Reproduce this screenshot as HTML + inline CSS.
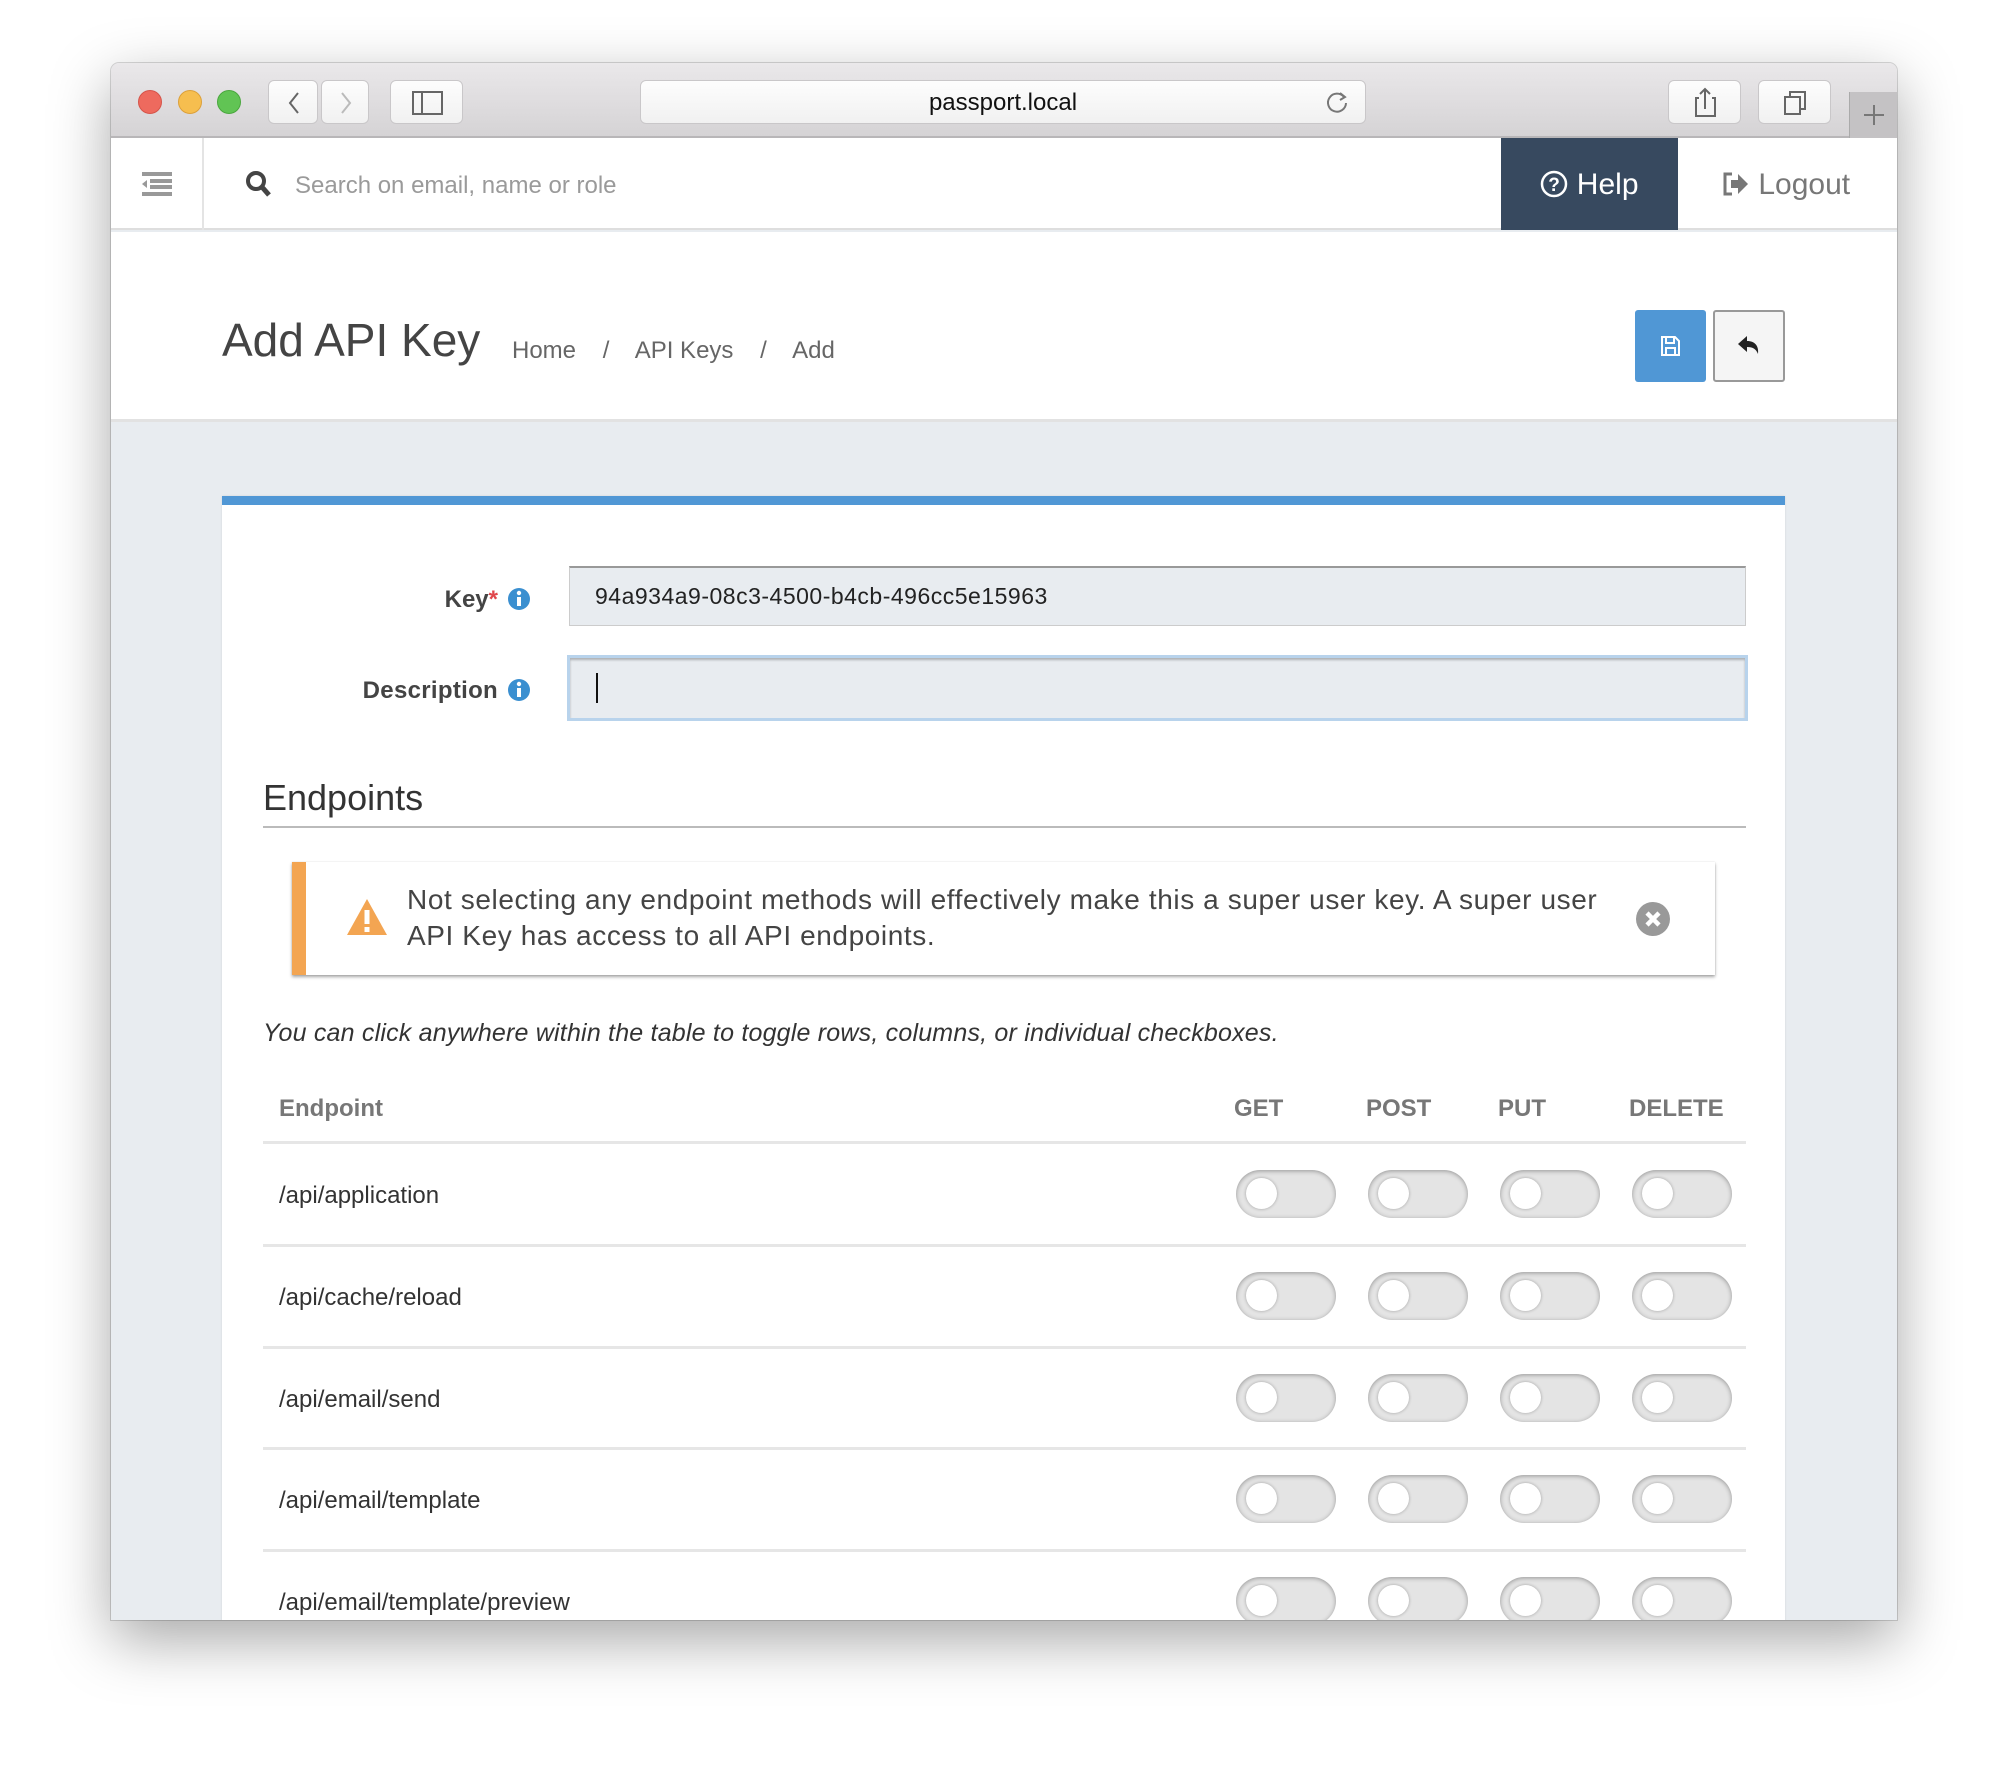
<!DOCTYPE html>
<html><head><meta charset="utf-8"><style>
*{box-sizing:border-box;margin:0;padding:0}
body{width:2008px;height:1780px;background:#fff;font-family:"Liberation Sans",Arial,sans-serif;position:relative;overflow:hidden}
.abs{position:absolute}
.win{left:111px;top:63px;width:1786px;height:1557px;border-radius:8px 8px 0 0;overflow:hidden;box-shadow:0 20px 60px rgba(0,0,0,.35),0 0 0 1px rgba(0,0,0,.15);background:#e8ecf0}
.tb{left:0;top:0;width:1786px;height:75px;background:linear-gradient(#eae8ea,#d5d3d5);border-bottom:2px solid #b8b6b8}
.dot{width:24px;height:24px;border-radius:50%;top:27px}
.btn{top:17px;height:44px;background:linear-gradient(#fdfdfd,#f1f1f1);border:1px solid #c9c7c9;border-radius:6px}
.nav{left:0;top:75px;width:1786px;height:92px;background:#fff;border-bottom:2px solid #dedede}
.toggle{width:100px;height:48px;border-radius:24px;background:#e4e4e4;box-shadow:inset 0 1px 5px rgba(0,0,0,.35)}
.toggle:after{content:"";position:absolute;left:10px;top:8px;width:31px;height:31px;border-radius:50%;background:#fff;box-shadow:0 0 3px rgba(0,0,0,.3)}
.row{left:41px;width:1483px;border-top:3px solid #e6e6e6}
.ep{font-size:24px;color:#333;left:57px}
.th{font-size:24px;font-weight:bold;color:#777;top:590px}
</style></head><body>
<div class="abs win">
 <div class="abs tb">
  <div class="abs dot" style="left:27px;background:#ee6a5e;border:1px solid #d5544a"></div>
  <div class="abs dot" style="left:67px;background:#f6be4f;border:1px solid #dca03a"></div>
  <div class="abs dot" style="left:106px;background:#61c454;border:1px solid #4aa73e"></div>
  <div class="abs btn" style="left:157px;width:50px"><svg width="50" height="44"><path d="M29 12 L21 22 L29 32" stroke="#666" stroke-width="2" fill="none"/></svg></div>
  <div class="abs btn" style="left:210px;width:48px"><svg width="48" height="44"><path d="M20 12 L28 22 L20 32" stroke="#bbb" stroke-width="2" fill="none"/></svg></div>
  <div class="abs btn" style="left:279px;width:73px"><svg width="73" height="44"><rect x="22" y="11" width="29" height="22" stroke="#666" stroke-width="2" fill="none"/><line x1="31" y1="11" x2="31" y2="33" stroke="#666" stroke-width="2"/></svg></div>
  <div class="abs btn" style="left:529px;width:726px;text-align:center;line-height:44px;font-size:24px;color:#111">passport.local<svg class="abs" style="right:14px;top:9px" width="26" height="26"><path d="M19 7 A9 9 0 1 0 21 13" stroke="#777" stroke-width="2" fill="none"/><path d="M15 3 L20 7 L15 10" stroke="#777" stroke-width="2" fill="none"/></svg></div>
  <div class="abs btn" style="left:1557px;width:73px"><svg width="73" height="44"><path d="M30 17 H27 V35 H46 V17 H43 M36 28 V8 M31 13 L36 8 L41 13" stroke="#666" stroke-width="2" fill="none"/></svg></div>
  <div class="abs btn" style="left:1647px;width:73px"><svg width="73" height="44"><rect x="26" y="16" width="15" height="17" stroke="#666" stroke-width="2" fill="none"/><path d="M31 16 V11 H46 V28 H41" stroke="#666" stroke-width="2" fill="none"/></svg></div>
  <div class="abs" style="left:1738px;top:29px;width:48px;height:46px;background:#c4c2c4;border-left:1px solid #aaa"><svg width="48" height="46"><path d="M24 13 V33 M14 23 H34" stroke="#777" stroke-width="2"/></svg></div>
 </div>
 <div class="abs nav">
  <svg class="abs" style="left:31px;top:34px" width="30" height="24"><rect x="0" y="0" width="30" height="4" fill="#999"/><rect x="8" y="7" width="22" height="4" fill="#999"/><rect x="8" y="13" width="22" height="4" fill="#999"/><rect x="0" y="20" width="30" height="4" fill="#999"/><path d="M0 12 L5 8 V16Z" fill="#999"/></svg>
  <div class="abs" style="left:91px;top:0;width:2px;height:92px;background:#e4e4e4"></div>
  <svg class="abs" style="left:134px;top:31px" width="28" height="30"><circle cx="11" cy="12" r="8" stroke="#444" stroke-width="4" fill="none"/><path d="M17 18 L24 26" stroke="#444" stroke-width="5"/></svg>
  <div class="abs" style="left:184px;top:34px;font-size:24px;color:#9a9a9a">Search on email, name or role</div>
  <div class="abs" style="left:1390px;top:0;width:177px;height:92px;background:#37495f;color:#fff;font-size:30px;line-height:94px;text-align:center"><svg style="vertical-align:-4px" width="28" height="28"><circle cx="14" cy="14" r="12" stroke="#fff" stroke-width="2.5" fill="none"/><text x="14" y="21" font-size="19" font-weight="bold" text-anchor="middle" fill="#fff" font-family="Liberation Sans">?</text></svg> Help</div>
  <div class="abs" style="left:1611px;top:0;height:92px;line-height:94px;font-size:30px;color:#777"><svg style="vertical-align:-3px" width="28" height="26"><path d="M10 3 H3 V23 H10" stroke="#777" stroke-width="3" fill="none"/><path d="M9 9 H16 V3 L26 13 L16 23 V17 H9Z" fill="#777"/></svg> Logout</div>
 </div>
 <div class="abs" style="left:0;top:169px;width:1786px;height:190px;background:#fff;border-bottom:3px solid #e2e2e2"></div>
 <div class="abs" style="left:111px;top:250px;font-size:46px;color:#444">Add API Key</div>
 <div class="abs" style="left:401px;top:274px;font-size:24px;color:#666;white-space:pre">Home    /    API Keys    /    Add</div>
 <div class="abs" style="left:1524px;top:247px;width:71px;height:72px;background:#5097d5;border-radius:3px"><svg width="71" height="72"><path d="M27 27 H40 L44 31 V45 H27Z M31 27 V33 H39 V27 M31 45 V38 H40 V45" stroke="#fff" stroke-width="2" fill="none"/></svg></div>
 <div class="abs" style="left:1602px;top:247px;width:72px;height:72px;background:#f5f5f5;border:2px solid #999;border-radius:3px"><svg width="68" height="68"><path d="M23 32 L32 24 V29 C40 29 44 34 43 42 C41 37 38 35 32 35 V40Z" fill="#222"/></svg></div>
 <!-- card -->
 <div class="abs" style="left:111px;top:433px;width:1563px;height:1200px;background:#fff;border-top:9px solid #5097d5;box-shadow:0 0 2px rgba(0,0,0,.1)">
  <div class="abs" style="left:0;width:276px;text-align:right;top:81px;font-size:24px;font-weight:bold;color:#444">Key<span style="color:#e0474c">*</span></div>
  <div class="abs" style="left:0;width:276px;text-align:right;top:172px;font-size:24px;font-weight:bold;color:#444;white-space:nowrap;letter-spacing:0.3px">Description</div>
  <svg class="abs" style="left:285px;top:82px" width="24" height="24"><circle cx="12" cy="12" r="11" fill="#3a8fd0"/><rect x="10" y="10" width="4" height="9" fill="#fff"/><circle cx="12" cy="6" r="2.2" fill="#fff"/></svg>
  <svg class="abs" style="left:285px;top:173px" width="24" height="24"><circle cx="12" cy="12" r="11" fill="#3a8fd0"/><rect x="10" y="10" width="4" height="9" fill="#fff"/><circle cx="12" cy="6" r="2.2" fill="#fff"/></svg>
  <div class="abs" style="left:347px;top:61px;width:1177px;height:60px;background:#e8ecf0;border:1px solid #ccc;border-top:2px solid #999;padding-left:25px;line-height:56px;font-size:23px;letter-spacing:0.5px;color:#222">94a934a9-08c3-4500-b4cb-496cc5e15963</div>
  <div class="abs" style="left:345px;top:150px;width:1181px;height:66px;background:#e8ecf0;border:3px solid #b8d3ec;box-shadow:inset 0 2px 2px rgba(0,0,0,.25)"><div class="abs" style="left:26px;top:15px;width:2px;height:30px;background:#111"></div></div>
  <div class="abs" style="left:41px;top:272px;font-size:36px;color:#333">Endpoints</div>
  <div class="abs" style="left:41px;top:321px;width:1483px;height:2px;background:#bbb"></div>
  <div class="abs" style="left:70px;top:357px;width:1423px;height:113px;background:#fff;border-left:14px solid #f3a552;box-shadow:0 2px 3px rgba(0,0,0,.35),0 0 1px rgba(0,0,0,.15)">
   <svg class="abs" style="left:40px;top:35px" width="42" height="40"><path d="M21 2 L41 38 H1Z" fill="#f3a552"/><rect x="18.5" y="13" width="5" height="14" fill="#fff"/><rect x="18.5" y="30" width="5" height="5" fill="#fff"/></svg>
   <div class="abs" style="left:101px;top:20px;width:1260px;font-size:28px;letter-spacing:0.6px;line-height:36px;color:#444;white-space:nowrap">Not selecting any endpoint methods will effectively make this a super user key. A super user<br>API Key has access to all API endpoints.</div>
   <svg class="abs" style="left:1329px;top:39px" width="36" height="36"><circle cx="18" cy="18" r="17" fill="#999"/><path d="M12 12 L24 24 M24 12 L12 24" stroke="#fff" stroke-width="4.5"/></svg>
  </div>
  <div class="abs" style="left:41px;top:514px;font-size:25px;letter-spacing:0.2px;font-style:italic;color:#333">You can click anywhere within the table to toggle rows, columns, or individual checkboxes.</div>
  <div class="abs th" style="left:57px">Endpoint</div>
  <div class="abs th" style="left:1012px">GET</div>
  <div class="abs th" style="left:1144px">POST</div>
  <div class="abs th" style="left:1276px">PUT</div>
  <div class="abs th" style="left:1407px">DELETE</div>
  <div class="abs row" style="top:636px"></div>
  <div class="abs row" style="top:739px"></div>
  <div class="abs row" style="top:841px"></div>
  <div class="abs row" style="top:942px"></div>
  <div class="abs row" style="top:1044px"></div>
  <div class="abs ep" style="top:677px">/api/application</div>
  <div class="abs ep" style="top:779px">/api/cache/reload</div>
  <div class="abs ep" style="top:881px">/api/email/send</div>
  <div class="abs ep" style="top:982px">/api/email/template</div>
  <div class="abs ep" style="top:1084px">/api/email/template/preview</div>
  <div class="abs toggle" style="left:1014px;top:665px"></div><div class="abs toggle" style="left:1146px;top:665px"></div><div class="abs toggle" style="left:1278px;top:665px"></div><div class="abs toggle" style="left:1410px;top:665px"></div>
  <div class="abs toggle" style="left:1014px;top:767px"></div><div class="abs toggle" style="left:1146px;top:767px"></div><div class="abs toggle" style="left:1278px;top:767px"></div><div class="abs toggle" style="left:1410px;top:767px"></div>
  <div class="abs toggle" style="left:1014px;top:869px"></div><div class="abs toggle" style="left:1146px;top:869px"></div><div class="abs toggle" style="left:1278px;top:869px"></div><div class="abs toggle" style="left:1410px;top:869px"></div>
  <div class="abs toggle" style="left:1014px;top:970px"></div><div class="abs toggle" style="left:1146px;top:970px"></div><div class="abs toggle" style="left:1278px;top:970px"></div><div class="abs toggle" style="left:1410px;top:970px"></div>
  <div class="abs toggle" style="left:1014px;top:1072px"></div><div class="abs toggle" style="left:1146px;top:1072px"></div><div class="abs toggle" style="left:1278px;top:1072px"></div><div class="abs toggle" style="left:1410px;top:1072px"></div>
 </div>
</div>
</body></html>
